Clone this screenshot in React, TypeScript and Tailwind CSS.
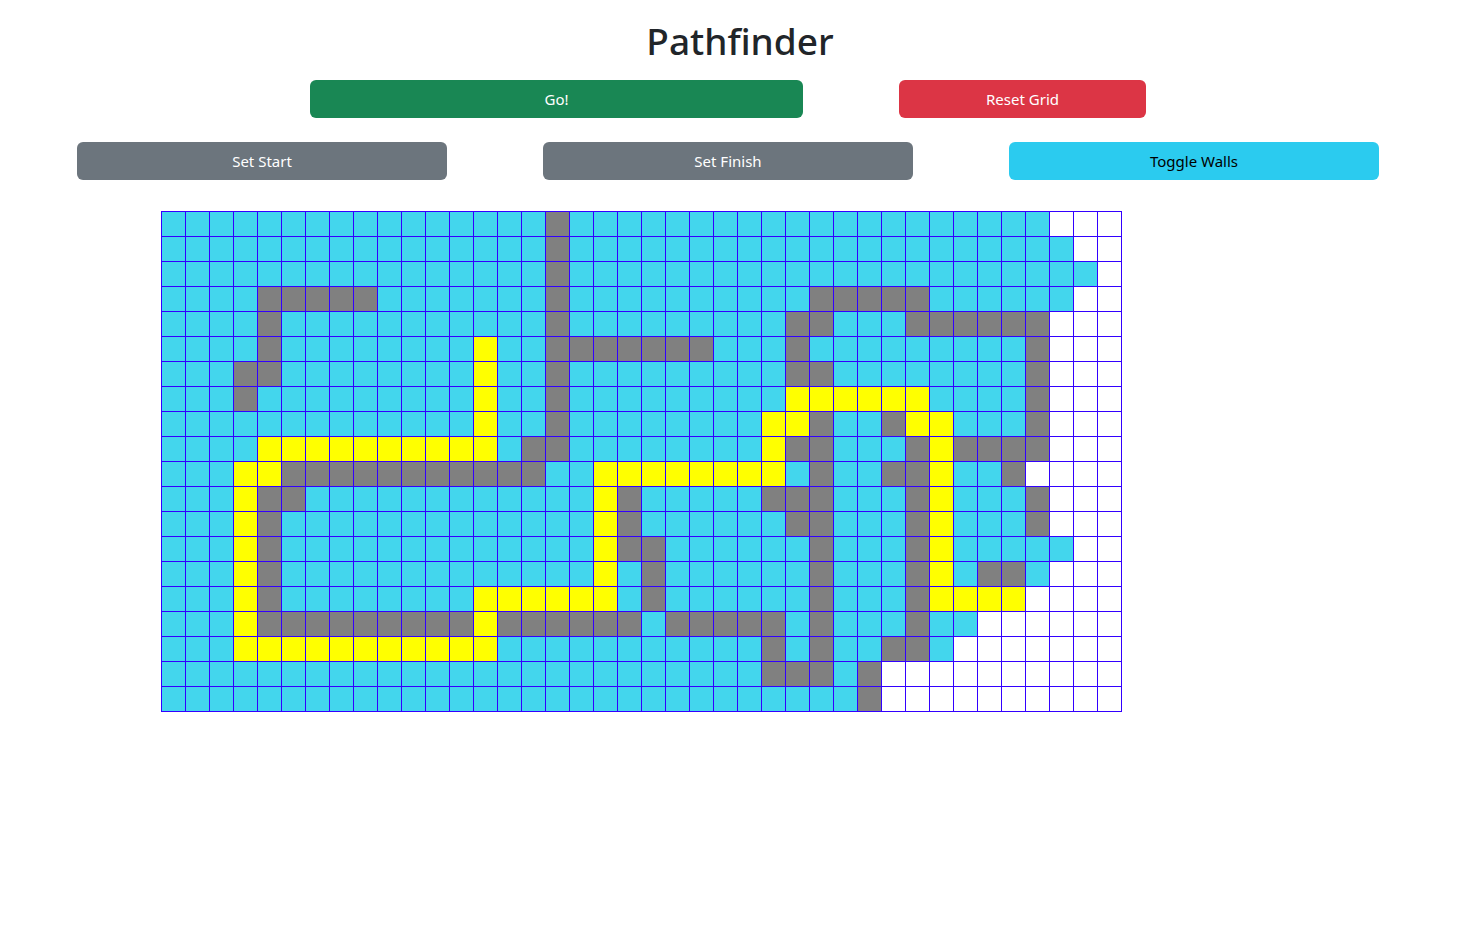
const rows = [
  "C16 W1 C20 .3",
  "C16 W1 C21 .2",
  "C16 W1 C22 .1",
  "C4 W5 C7 W1 C10 W5 C6 .2",
  "C4 W1 C11 W1 C9 W2 C3 W6 .3",
  "C4 W1 C8 Y1 C2 W7 C3 W1 C9 W1 .3",
  "C3 W2 C8 Y1 C2 W1 C9 W2 C8 W1 .3",
  "C3 W1 C9 Y1 C2 W1 C9 Y6 C4 W1 .3",
  "C13 Y1 C2 W1 C8 Y2 W1 C2 W1 Y2 C3 W1 .3",
  "C4 Y10 C1 W2 C8 Y1 W2 C3 W1 Y1 W4 .3",
  "C3 Y2 W11 C2 Y8 C1 W1 C2 W2 Y1 C2 W1 .4",
  "C3 Y1 W2 C12 Y1 W1 C5 W3 C3 W1 Y1 C3 W1 .3",
  "C3 Y1 W1 C13 Y1 W1 C6 W2 C3 W1 Y1 C3 W1 .3",
  "C3 Y1 W1 C13 Y1 W2 C6 W1 C3 W1 Y1 C5 .2",
  "C3 Y1 W1 C13 Y1 C1 W1 C6 W1 C3 W1 Y1 C1 W2 C1 .3",
  "C3 Y1 W1 C8 Y6 C1 W1 C6 W1 C3 W1 Y4 .4",
  "C3 Y1 W9 Y1 W6 C1 W5 C1 W1 C3 W1 C2 .6",
  "C3 Y11 C11 W1 C1 W1 C2 W2 C1 .7",
  "C25 W3 C1 W1 .10",
  "C29 W1 .10",
];

const grid = rows.map((row) =>
  row.split(" ").flatMap((tok) => Array<string>(Number(tok.slice(1))).fill(tok[0]))
);

const cellTone: Record<string, string> = {
  C: "bg-[#43d6ed]",
  W: "bg-[#808080]",
  Y: "bg-[#ffff00]",
  ".": "bg-white",
};

export default function App() {
  return (
    <div className="min-h-[937px] bg-white font-['Noto_Sans',sans-serif] text-[#212529]">
      <h1 className="pt-[17px] text-center text-[37px] font-medium leading-[48px]">Pathfinder</h1>

      <div className="mt-[15px] flex gap-[96px] pl-[310px]">
        <button className="h-[38px] w-[493px] rounded-md bg-[#198754] text-[15px] text-white">Go!</button>
        <button className="h-[38px] w-[247px] rounded-md bg-[#dc3545] text-[15px] text-white">Reset Grid</button>
      </div>

      <div className="mt-[24px] flex gap-[96px] pl-[77px]">
        <button className="h-[38px] w-[370px] rounded-md bg-[#6c757d] text-[15px] text-white">Set Start</button>
        <button className="h-[38px] w-[370px] rounded-md bg-[#6c757d] text-[15px] text-white">Set Finish</button>
        <button className="h-[38px] w-[370px] rounded-md bg-[#2bcbef] text-[15px] text-black">Toggle Walls</button>
      </div>

      <div className="ml-[161px] mt-[31px] inline-block border-l border-t border-[#3300ff]">
        {grid.map((row, r) => (
          <div key={r} className="flex">
            {row.map((c, i) => (
              <div key={i} className={`h-[25px] w-[24px] border-b border-r border-[#3300ff] ${cellTone[c]}`} />
            ))}
          </div>
        ))}
      </div>
    </div>
  );
}
